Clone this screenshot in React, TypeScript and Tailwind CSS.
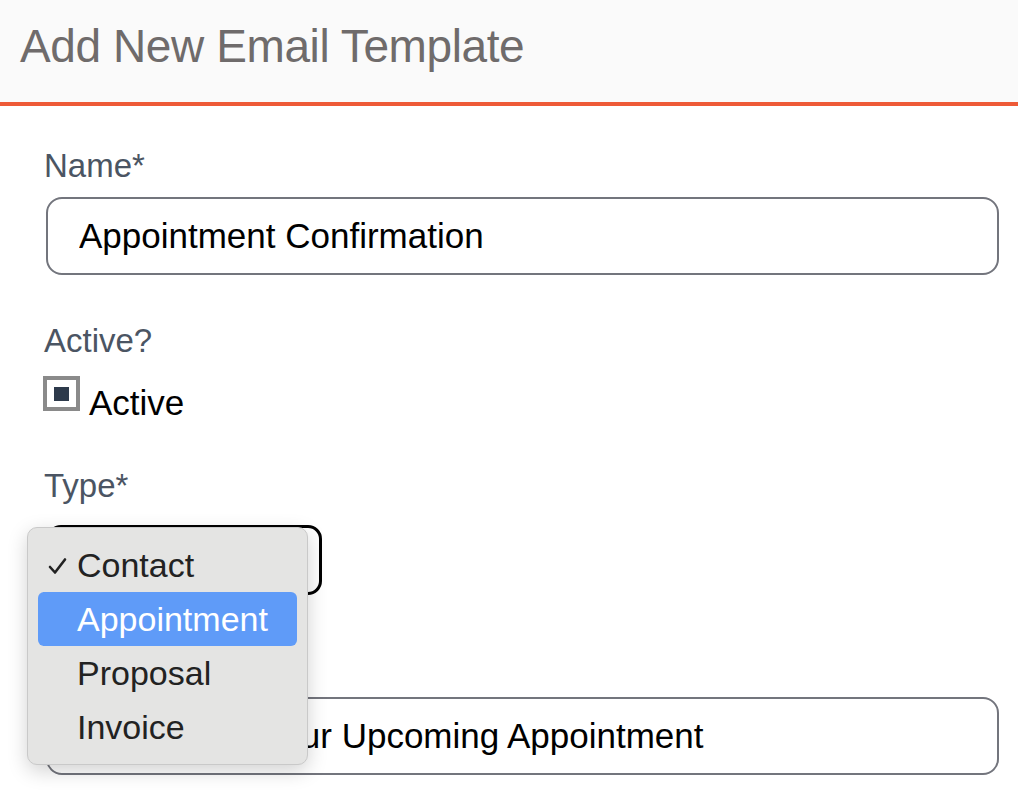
import { useState } from "react";

const types = ["Contact", "Appointment", "Proposal", "Invoice"];

function Label({ children }: { children: React.ReactNode }) {
  return <label className="block pl-[44px] text-[33px] leading-[40px] text-[#4b5563]">{children}</label>;
}

export default function App() {
  const [name, setName] = useState("Appointment Confirmation");
  const [subject, setSubject] = useState("Reminder - Your Upcoming Appointment");
  const [active, setActive] = useState(true);
  const [type] = useState("Contact");
  const hovered = "Appointment";

  return (
    <main className="relative min-h-screen bg-white font-['Liberation_Sans',Arial,sans-serif]">
      <header className="flex h-[106px] items-start border-b-4 border-[#ee5a37] bg-[#fafafa] pl-5 pt-[20px]">
        <h1 className="text-[46px] leading-[52px] tracking-[-0.4px] text-[#6f6b6b]">Add New Email Template</h1>
      </header>

      <div className="pt-[40px] pr-[19px]">
        <Label>Name*</Label>
        <input
          value={name}
          onChange={(e) => setName(e.target.value)}
          className="ml-[46px] mt-[11px] block h-[78px] w-[953px] rounded-[16px] border-2 border-[#73757d] px-[31px] text-[35px] text-black outline-none"
        />

        <div className="mt-[46px]">
          <Label>Active?</Label>
        </div>
        <label className="ml-[43px] mt-[15px] flex items-start gap-[9px]" onClick={() => setActive(!active)}>
          <span className="flex h-[35px] w-[37px] items-center justify-center border-4 border-[#8a8a8a] bg-white">
            {active && <span className="h-[14px] w-[15px] bg-[#2d3a4b]" />}
          </span>
          <span className="mt-[7px] text-[35px] leading-[40px] text-black">Active</span>
        </label>

        <div className="mt-[43px]">
          <Label>Type*</Label>
        </div>
        <div className="ml-[47px] mt-[19px] flex h-[70px] w-[275px] items-center rounded-[14px] border-[3px] border-black px-[30px] text-[35px]">
          {type}
        </div>

        <div className="mt-[46px]">
          <Label>Subject*</Label>
        </div>
        <input
          value={subject}
          onChange={(e) => setSubject(e.target.value)}
          className="ml-[46px] mt-[16px] block h-[78px] w-[953px] rounded-[16px] border-2 border-[#73757d] px-[31px] text-[35px] text-black outline-none"
        />
      </div>

      {/* open native select menu */}
      <div className="absolute left-[27px] top-[527px] w-[281px] rounded-[10px] border border-[#c9c9c9] bg-[#e4e4e3] px-[10px] py-[10px] shadow-[0_6px_20px_rgba(0,0,0,0.18)]">
        {types.map((t) => (
          <div
            key={t}
            className={`relative flex h-[54px] items-center rounded-[6px] pl-[39px] text-[34px] ${
              t === hovered ? "bg-[#5f9bf8] text-white" : "text-[#222222]"
            }`}
          >
            {t === type && (
              <svg className="absolute left-[10px] top-[19px]" width="19" height="18" viewBox="0 0 19 18" fill="none">
                <path d="M2 10 L7 15.5 L17 2.5" stroke="#222" strokeWidth="2.6" strokeLinecap="round" strokeLinejoin="round" />
              </svg>
            )}
            {t}
          </div>
        ))}
      </div>
    </main>
  );
}
